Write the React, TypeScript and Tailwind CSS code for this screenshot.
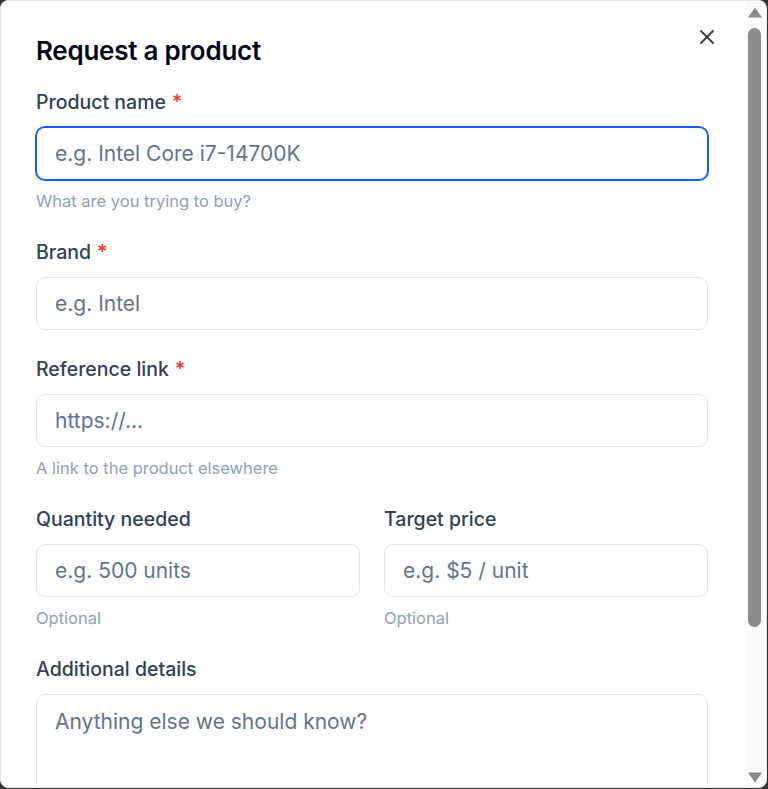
import React from 'react';
import { X } from 'lucide-react';

const font = { fontFamily: 'Inter, "Noto Sans", sans-serif' };

function Label({ text, required }: { text: string; required?: boolean }) {
  return (
    <label className="mb-[13px] block text-[19.5px] leading-[24px] font-medium text-slate-700">
      {text}
      {required && <span className="ml-[6px] text-red-500">*</span>}
    </label>
  );
}

function Hint({ text }: { text: string }) {
  return <p className="mt-[10px] pb-[1px] text-[16.5px] leading-[22px] text-slate-400">{text}</p>;
}

const inputBase =
  'block h-[53px] w-full rounded-[9px] border bg-white px-[18px] text-[21px] text-slate-800 placeholder:text-slate-500 outline-none';

// classic scrollbar drawn over the dialog's right edge
function FakeScrollbar() {
  return (
    <>
      <div className="absolute left-[745px] top-0 h-full w-[17px] bg-[#fafafa]" />
      <svg className="absolute left-[746px] top-[6px]" width="16" height="11" viewBox="0 0 16 11">
        <path d="M8 0.5 L15 10.5 L1 10.5 Z" fill="#8a8a8a" />
      </svg>
      <div className="absolute left-[747px] top-[27px] h-[599px] w-[13px] rounded-full bg-[#8c8c8c]" />
      <svg className="absolute left-[746px] top-[771px]" width="16" height="11" viewBox="0 0 16 11">
        <path d="M1 0.5 L15 0.5 L8 10.5 Z" fill="#8a8a8a" />
      </svg>
    </>
  );
}

export default function App() {
  return (
    <div className="h-[789px] w-[768px] bg-black/80" style={font}>
      <div className="relative h-[788px] w-[767px] overflow-hidden rounded-lg border border-slate-200 bg-white">
        {/* close */}
        <button className="absolute right-[47px] top-[24px] z-10 text-slate-700">
          <X size={24} strokeWidth={1.9} />
        </button>

        <div className="h-full overflow-hidden pl-[35px] pr-[58px] pt-[34px] pb-8">
          <h2 className="mb-[23px] text-[26px] leading-[32px] font-semibold tracking-[-0.01em] text-slate-950">
            Request a product
          </h2>

          <div className="flex flex-col gap-[27px]">
            <div>
              <Label text="Product name" required />
              <input
                autoFocus
                className={`${inputBase} border-blue-600 ring-1 ring-blue-600`}
                placeholder="e.g. Intel Core i7-14700K"
              />
              <Hint text="What are you trying to buy?" />
            </div>

            <div>
              <Label text="Brand" required />
              <input className={`${inputBase} border-slate-200`} placeholder="e.g. Intel" />
            </div>

            <div>
              <Label text="Reference link" required />
              <input className={`${inputBase} border-slate-200`} placeholder="https://..." />
              <Hint text="A link to the product elsewhere" />
            </div>

            <div className="grid grid-cols-2 gap-6">
              <div>
                <Label text="Quantity needed" />
                <input className={`${inputBase} border-slate-200`} placeholder="e.g. 500 units" />
                <Hint text="Optional" />
              </div>
              <div>
                <Label text="Target price" />
                <input className={`${inputBase} border-slate-200`} placeholder="e.g. $5 / unit" />
                <Hint text="Optional" />
              </div>
            </div>

            <div>
              <Label text="Additional details" />
              <textarea
                className="block h-[130px] w-full resize-none rounded-[9px] border border-slate-200 bg-white px-[18px] pt-[13px] text-[21px] leading-[28px] text-slate-800 placeholder:text-slate-500 outline-none"
                placeholder="Anything else we should know?"
              />
            </div>
          </div>
        </div>

        <FakeScrollbar />
      </div>
    </div>
  );
}
